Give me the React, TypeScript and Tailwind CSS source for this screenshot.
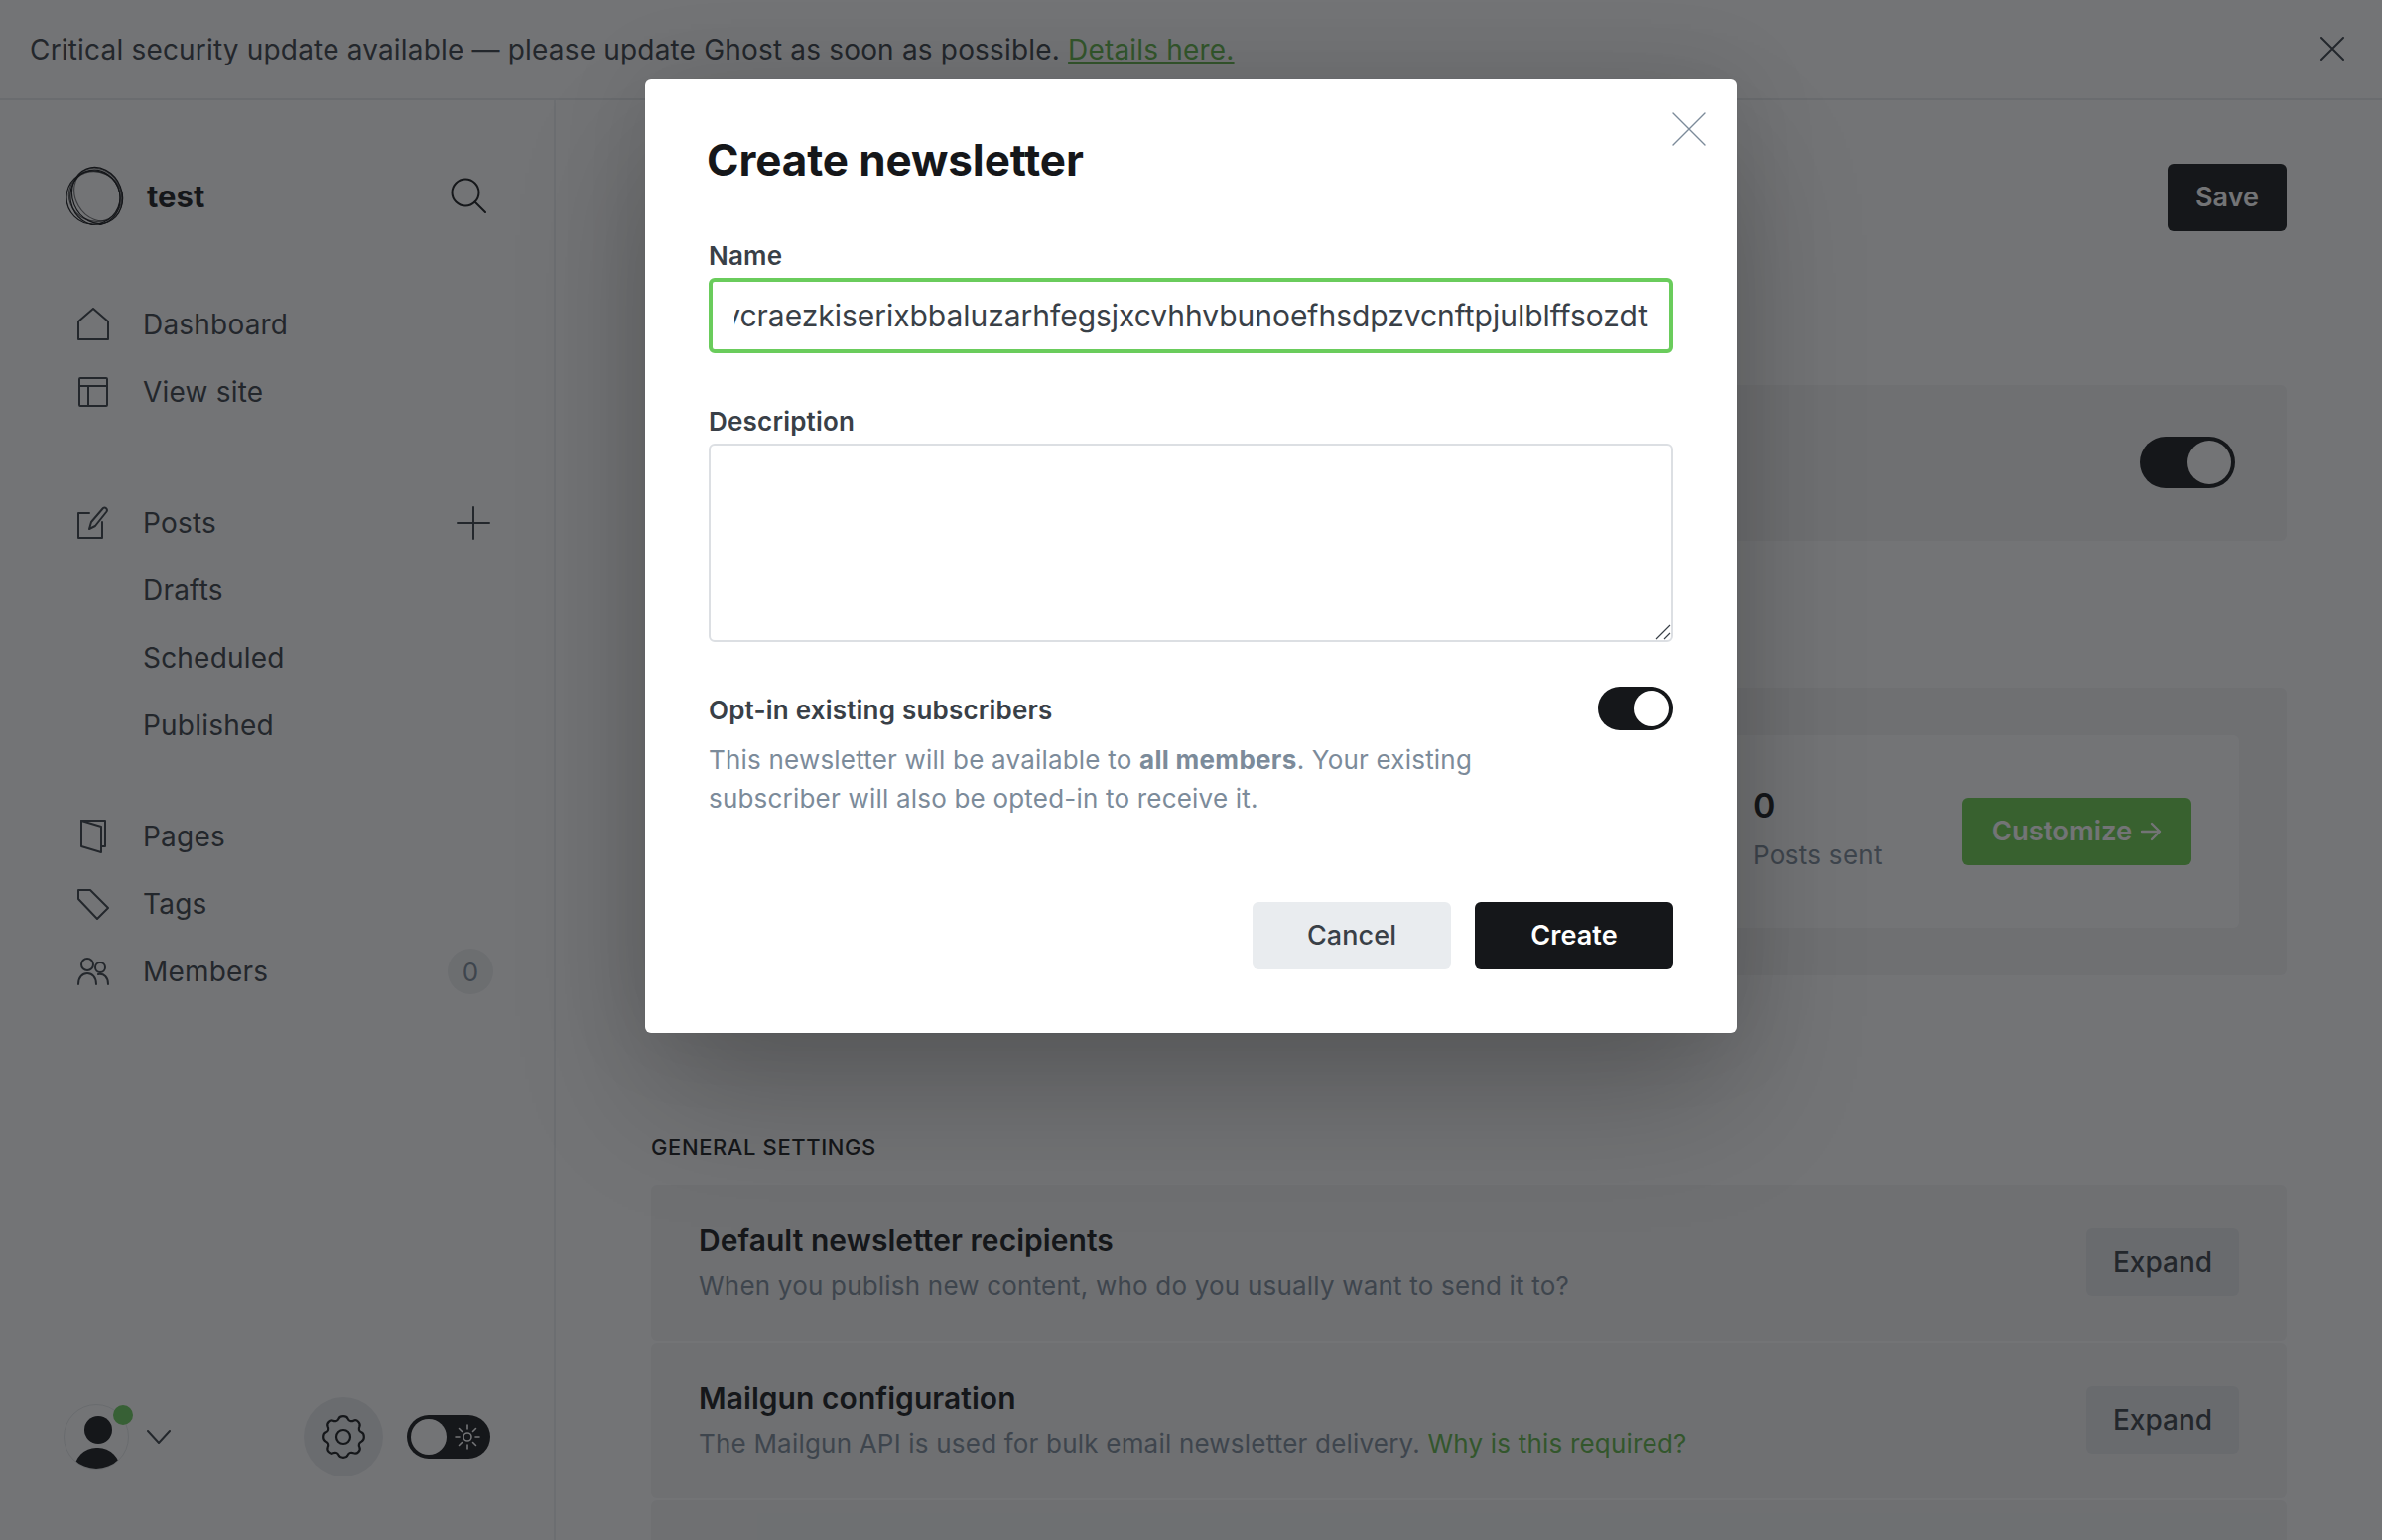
const Icon = ({ className, children, viewBox = '0 0 24 24', sw = 1.1 }: { className: string; children: React.ReactNode; viewBox?: string; sw?: number }) => (
    <svg viewBox={viewBox} fill="none" stroke="currentColor" strokeWidth={sw} strokeLinecap="round" strokeLinejoin="round" className={className}>
        {children}
    </svg>
);

const NavRow = ({ label, icon, right }: { label: string; icon?: React.ReactNode; right?: React.ReactNode }) => (
    <div className="flex h-[68px] items-center pl-[76px] pr-[64px] text-[28px] tracking-[0.2px] text-[#394047]">
        <div className="flex w-[36px] justify-center">{icon}</div>
        <span className="ml-[32px]">{label}</span>
        {right && <div className="ml-auto">{right}</div>}
    </div>
);

const SettingRow = ({ title, children }: { title: string; children: React.ReactNode }) => (
    <div className="flex h-[157px] shrink-0 items-center justify-between rounded-[6px] bg-[#f4f5f6] px-[48px]">
        <div>
            <div className="text-[30px] font-semibold leading-[40px] tracking-[0.05px] text-[#15171a]">{title}</div>
            <div className="mt-[6px] text-[26px] leading-[40px] tracking-[0.2px] text-[#7c8b9a]">{children}</div>
        </div>
        <button className="-mt-[2px] h-[68px] w-[154px] rounded-[6px] bg-[#e6e9eb] text-[28px] font-medium text-[#394047]">Expand</button>
    </div>
);

const App = () => {
    return (
        <div className="relative flex h-screen flex-col overflow-hidden bg-white font-['Inter',sans-serif]">
            {/* Banner */}
            <div className="flex h-[101px] shrink-0 items-center justify-between border-b-2 border-[#e9ebee] pl-[30px] pr-[38px]">
                <p className="text-[28px] tracking-[0.18px] text-[#394047]">
                    Critical security update available — please update Ghost as soon as possible.{' '}
                    <a className="text-[#5fb548] underline">Details here.</a>
                </p>
                <Icon className="-mt-[2px] h-[24px] w-[24px] text-[#394047]" sw={2}>
                    <path d="M1 1l22 22M23 1L1 23" />
                </Icon>
            </div>

            <div className="flex min-h-0 flex-1">
                {/* Sidebar */}
                <aside className="relative flex w-[560px] shrink-0 flex-col border-r-2 border-[#eef0f2] pb-[64px] pt-[66px]">
                    <div className="flex h-[60px] items-center pl-[66px] pr-[68px]">
                        <svg viewBox="0 0 60 60" fill="none" stroke="#15171a" strokeWidth="1.2" className="h-[60px] w-[60px]">
                            <ellipse cx="28" cy="32" rx="27" ry="27" />
                            <ellipse cx="30" cy="32" rx="25" ry="28" transform="rotate(-12 30 32)" />
                            <ellipse cx="32" cy="30" rx="25" ry="29" transform="rotate(-22 32 30)" />
                            <ellipse cx="30" cy="31" rx="27" ry="25" transform="rotate(25 30 31)" strokeOpacity="0.7" />
                            <ellipse cx="33" cy="29" rx="23" ry="28" transform="rotate(-30 33 29)" strokeOpacity="0.6" />
                        </svg>
                        <span className="ml-[22px] mt-[2px] text-[31px] font-bold text-[#15171a]">test</span>
                        <Icon className="ml-auto h-[36px] w-[36px] text-[#15171a]" viewBox="0 0 36 36" sw={2}>
                            <circle cx="15" cy="15" r="13.500" />
                            <path d="M24.500 24.500l10.500 10.500" />
                        </Icon>
                    </div>

                    <nav className="mt-[66px]">
                        <NavRow
                            label="Dashboard"
                            icon={
                                <Icon className="h-[34px] w-[34px]" viewBox="0 0 34 34" sw={2}>
                                    <path d="M2 32V14L17 1l15 13v18z" />
                                </Icon>
                            }
                        />
                        <NavRow
                            label="View site"
                            icon={
                                <Icon className="h-[32px] w-[32px]" viewBox="0 0 32 32" sw={2}>
                                    <rect x="2" y="2" width="28" height="28" rx="1" />
                                    <path d="M2 10h28M11 10v20" />
                                </Icon>
                            }
                        />
                    </nav>

                    <nav className="mt-[64px]">
                        <NavRow
                            label="Posts"
                            icon={
                                <Icon className="h-[34px] w-[32px]" viewBox="0 0 32 34" sw={2}>
                                    <path d="M12 7H1v25h24V16" />
                                    <path d="M12 23l2-7L26 2c2-1.500 5 1 3.500 3.500L18 20z" />
                                </Icon>
                            }
                            right={
                                <Icon className="h-[34px] w-[34px]" viewBox="0 0 34 34" sw={2}>
                                    <path d="M17 1v32M1 17h32" />
                                </Icon>
                            }
                        />
                        <NavRow label="Drafts" />
                        <NavRow label="Scheduled" />
                        <NavRow label="Published" />
                    </nav>

                    <nav className="mt-[44px]">
                        <NavRow
                            label="Pages"
                            icon={
                                <Icon className="h-[34px] w-[28px]" viewBox="0 0 28 34" sw={2}>
                                    <path d="M2 1h24v26h-4" />
                                    <path d="M2 1l20 6v26L2 27z" />
                                </Icon>
                            }
                        />
                        <NavRow
                            label="Tags"
                            icon={
                                <Icon className="h-[32px] w-[32px]" viewBox="0 0 32 32" sw={2}>
                                    <path d="M1 2h12l18 18-11 11L1 11z" />
                                </Icon>
                            }
                        />
                        <NavRow
                            label="Members"
                            icon={
                                <Icon className="h-[28px] w-[32px]" viewBox="0 0 32 28" sw={2}>
                                    <circle cx="10" cy="7" r="6" />
                                    <circle cx="23" cy="10" r="5" />
                                    <path d="M1 27c0-7 4-11 9-11s9 4 9 11" />
                                    <path d="M21 17c6-1 10 3 10 10" />
                                </Icon>
                            }
                            right={
                                <div className="-mr-[3px] flex h-[46px] w-[46px] items-center justify-center rounded-full bg-[#edeff1] text-[26px] text-[#7c8b9a]">0</div>
                            }
                        />
                    </nav>

                    <div className="mt-auto flex h-[80px] items-center pl-[64px] pr-[64px]">
                        <div className="relative h-[66px] w-[66px] overflow-hidden rounded-full border border-[#e6e9eb]">
                            <div className="absolute left-[20px] top-[11px] h-[28px] w-[28px] rounded-full bg-[#15171a]" />
                            <div className="absolute left-[10px] top-[43px] h-[44px] w-[46px] rounded-full bg-[#15171a]" />
                        </div>
                        <div className="absolute left-[114px] top-[1315px] h-[20px] w-[20px] rounded-full bg-[#6acc5c]" />
                        <Icon className="ml-[18px] h-[14px] w-[24px] text-[#394047]" viewBox="0 0 24 14" sw={2}>
                            <path d="M1 1l11 12L23 1" />
                        </Icon>
                        <div className="ml-auto flex h-[80px] w-[80px] items-center justify-center rounded-full bg-[#e9ebee]">
                            <Icon className="h-[56px] w-[56px] text-[#15171a]" sw={0.95}>
                                <circle cx="12" cy="12" r="3" />
                                <path d="M10 4.200c.6-1.500 3.400-1.500 4 0 .4 1 1.500 1.300 2.400.8 1.500-.7 3.200 1 2.600 2.600-.5.900-.2 2 .8 2.400 1.500.6 1.500 3.400 0 4-1 .4-1.300 1.500-.8 2.400.7 1.500-1 3.200-2.600 2.600-.9-.5-2-.2-2.400.8-.6 1.500-3.400 1.500-4 0-.4-1-1.500-1.300-2.400-.8-1.500.7-3.200-1-2.600-2.600.5-.9.200-2-.8-2.400-1.500-.6-1.500-3.400 0-4 1-.4 1.300-1.500.8-2.400-.7-1.500 1-3.200 2.600-2.600.9.500 2 .2 2.400-.8z" />
                            </Icon>
                        </div>
                        <div className="ml-[24px] flex h-[44px] w-[84px] items-center rounded-full bg-[#15171a] pl-[4px]">
                            <div className="h-[36px] w-[36px] rounded-full bg-white" />
                            <Icon className="ml-[8px] h-[26px] w-[26px] text-white" viewBox="0 0 26 26" sw={1.6}>
                                <circle cx="13" cy="13" r="4" />
                                <path d="M13 1v4M13 21v4M1 13h4M21 13h4M4.500 4.500l3 3M18.500 18.500l3 3M4.500 21.500l3-3M18.500 7.500l3-3" />
                            </Icon>
                        </div>
                    </div>
                </aside>

                {/* Newsletter settings behind the modal */}
                <main className="min-w-0 flex-1 px-[96px] pt-[64px]">
                    <div className="flex justify-end">
                        <button className="h-[68px] w-[120px] rounded-[6px] bg-[#15171a] text-[27px] font-semibold text-white">Save</button>
                    </div>

                    <div className="mt-[155px] flex h-[157px] items-center justify-end rounded-[6px] bg-[#f4f5f6] pr-[52px]">
                        <div className="-mt-[2px] flex h-[52px] w-[96px] items-center justify-end rounded-full bg-[#15171a] pr-[4px]">
                            <div className="h-[44px] w-[44px] rounded-full bg-white" />
                        </div>
                    </div>

                    <div className="mt-[148px] h-[290px] rounded-[6px] bg-[#f4f5f6] p-[48px]">
                        <div className="flex h-[194px] items-center justify-end rounded-[6px] bg-white pr-[48px]">
                            <div className="-mt-[3px] w-[131px] whitespace-nowrap">
                                <div className="text-[34px] font-semibold leading-[40px] text-[#15171a]">0</div>
                                <div className="mt-[10px] text-[26px] leading-[40px] tracking-[0.3px] text-[#7c8b9a]">Posts sent</div>
                            </div>
                            <button className="ml-[80px] flex h-[68px] w-[231px] items-center justify-center gap-[8px] rounded-[6px] bg-[#6cd04f] text-[27.5px] font-semibold text-white">
                                Customize
                                <Icon className="h-[22px] w-[22px]" viewBox="0 0 22 22" sw={2.4}>
                                    <path d="M2 11h18M12 3l8 8-8 8" />
                                </Icon>
                            </button>
                        </div>
                    </div>

                    <h3 className="mt-[155px] text-[22px] font-medium uppercase leading-[36px] tracking-[0.6px] text-[#15171a]">General settings</h3>

                    <div className="mt-[20px] flex flex-col gap-[2px]">
                        <SettingRow title="Default newsletter recipients">When you publish new content, who do you usually want to send it to?</SettingRow>
                        <SettingRow title="Mailgun configuration">
                            The Mailgun API is used for bulk email newsletter delivery. <a className="text-[#5fb548]">Why is this required?</a>
                        </SettingRow>
                        <div className="h-[157px] rounded-[6px] bg-[#f4f5f6]" />
                    </div>
                </main>
            </div>

            {/* Dim layer */}
            <div className="absolute inset-0 bg-[#15171a]/60" />

            {/* Modal */}
            <div className="absolute left-[650px] top-[80px] h-[961px] w-[1100px] rounded-[6px] bg-white px-[64px] pt-[54px] shadow-[0_0_1px_rgba(0,0,0,0.12),0_70px_130px_-10px_rgba(0,0,0,0.22),0_0_90px_rgba(0,0,0,0.1)]">
                <Icon className="absolute right-[31px] top-[33px] h-[34px] w-[34px] text-[#7c8b9a]" viewBox="0 0 34 34" sw={1.4}>
                    <path d="M1 1l32 32M33 1L1 33" />
                </Icon>

                <h2 className="-ml-[2px] text-[44px] font-bold leading-[54px] tracking-[-0.1px] text-[#15171a]">Create newsletter</h2>

                <label className="mt-[52px] block text-[26px] font-semibold leading-[36px] tracking-[0.2px] text-[#394047]">Name</label>
                <div className="mt-[4px] flex h-[76px] items-center rounded-[6px] border-4 border-[#6acc5c] px-[22px]">
                    <div className="flex min-w-0 flex-1 justify-end overflow-hidden whitespace-nowrap text-[30px] tracking-[-0.03px] text-[#394047]">
                        <span className="shrink-0">xhvcraezkiserixbbaluzarhfegsjxcvhhvbunoefhsdpzvcnftpjulblffsozdt</span>
                    </div>
                </div>

                <label className="mt-[51px] block text-[26px] font-semibold leading-[36px] tracking-[0.2px] text-[#394047]">Description</label>
                <div className="relative mt-[4px] h-[200px]">
                    <textarea className="block h-full w-full resize-none rounded-[6px] border-2 border-[#dcdfe3] outline-none" />
                    <svg viewBox="0 0 16 16" fill="none" stroke="#394047" strokeWidth="1.2" className="absolute bottom-[2px] right-[2px] h-[16px] w-[16px]">
                        <path d="M1 15L15 1M9 15l6-6" />
                    </svg>
                </div>

                <div className="mt-[47px] flex items-start justify-between">
                    <div>
                        <div className="mt-[4px] text-[26px] font-semibold leading-[36px] tracking-[0.2px] text-[#394047]">Opt-in existing subscribers</div>
                        <p className="mt-[12px] w-[800px] text-[26px] leading-[39px] tracking-[0.2px] text-[#7c8b9a]">
                            This newsletter will be available to <b className="font-bold tracking-[0.3px]">all members</b>. Your existing subscriber will also be opted-in to receive it.
                        </p>
                    </div>
                    <div className="-mt-[2px] flex h-[44px] w-[76px] items-center justify-end rounded-full bg-[#15171a] pr-[4px]">
                        <div className="h-[36px] w-[36px] rounded-full bg-white" />
                    </div>
                </div>

                <div className="mt-[85px] flex justify-end gap-[24px]">
                    <button className="h-[68px] w-[200px] rounded-[6px] bg-[#e9ecef] text-[27px] font-medium tracking-[0.1px] text-[#394047]">Cancel</button>
                    <button className="h-[68px] w-[200px] rounded-[6px] bg-[#15171a] text-[27px] font-semibold tracking-[0.1px] text-white">Create</button>
                </div>
            </div>
        </div>
    );
};

export default App;
